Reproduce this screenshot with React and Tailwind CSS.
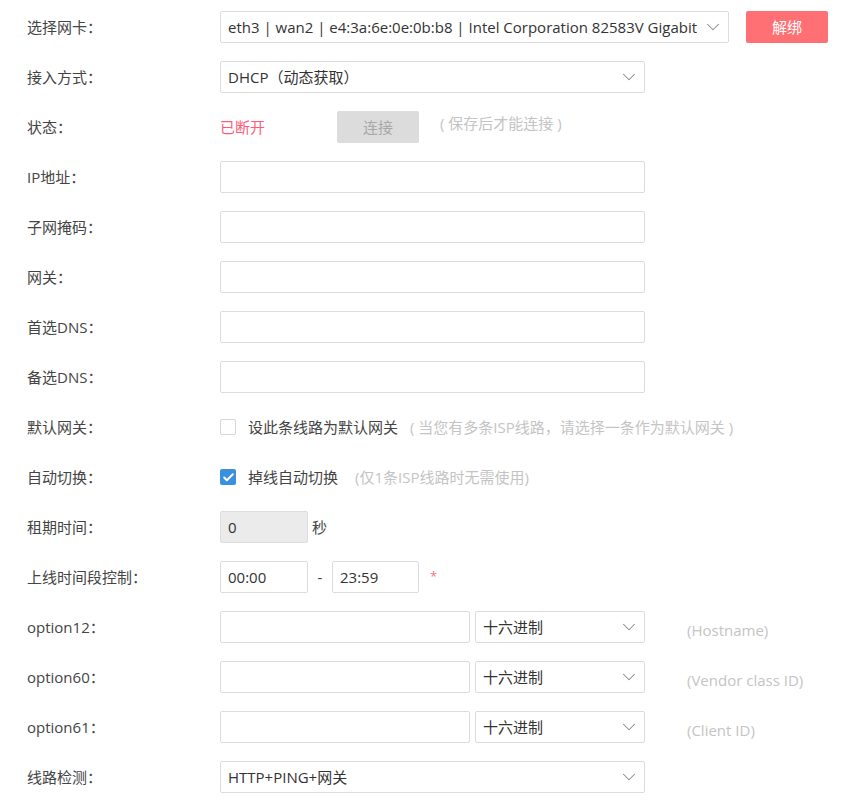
import { ChevronDown, Check } from 'lucide-react'

const Label = ({ children }) => (
  <div className="w-[193px] shrink-0 text-[15px] text-[#444]">{children}</div>
)

const Row = ({ label, children }) => (
  <div className="flex h-[32px] items-center mb-[18px]">
    <Label>{label}</Label>
    {children}
  </div>
)

const Input = ({ className = '', value = '', disabled }) => (
  <div
    className={`h-[32px] rounded-[2px] border border-[#dcdcdc] px-[7px] flex items-center text-[15px] text-[#333] ${disabled ? 'bg-[#ebebeb]' : 'bg-white'} ${className}`}
  >
    {value}
  </div>
)

const Select = ({ className = '', value }) => (
  <div className={`h-[32px] rounded-[2px] border border-[#dcdcdc] bg-white pl-[7px] pr-[4px] flex items-center justify-between text-[15px] text-[#333] ${className}`}>
    <span className="truncate">{value}</span>
    <ChevronDown size={22} strokeWidth={1.1} className="text-[#888] shrink-0" />
  </div>
)

const Hint = ({ children, className = '' }) => (
  <span className={`text-[15px] text-[#c4c4c4] ${className}`}>{children}</span>
)

export default function App() {
  return (
    <div
      className="w-[854px] h-[804px] bg-white pt-[11px] pl-[27px] overflow-hidden"
      style={{ fontFamily: '"Open Sans", "Noto Sans CJK SC", sans-serif' }}
    >
      <Row label="选择网卡：">
        <Select className="w-[509px]" value="eth3 | wan2 | e4:3a:6e:0e:0b:b8 | Intel Corporation 82583V Gigabit" />
        <button className="ml-[17px] h-[32px] w-[82px] rounded-[2px] bg-[#ff7075] text-[15px] text-white">解绑</button>
      </Row>
      <Row label="接入方式：">
        <Select className="w-[425px]" value="DHCP（动态获取）" />
      </Row>
      <Row label="状态：">
        <span className="w-[117px] text-[15px] text-[#ff5b79]">已断开</span>
        <button className="h-[32px] w-[82px] rounded-[2px] bg-[#dcdcdc] text-[15px] text-[#a8a8a8]">连接</button>
        <Hint className="ml-[21px] -mt-[8px]">( 保存后才能连接 )</Hint>
      </Row>
      <Row label="IP地址：">
        <Input className="w-[425px]" />
      </Row>
      <Row label="子网掩码：">
        <Input className="w-[425px]" />
      </Row>
      <Row label="网关：">
        <Input className="w-[425px]" />
      </Row>
      <Row label="首选DNS：">
        <Input className="w-[425px]" />
      </Row>
      <Row label="备选DNS：">
        <Input className="w-[425px]" />
      </Row>
      <Row label="默认网关：">
        <div className="w-[16px] h-[16px] rounded-[2px] border border-[#d6d6d6] bg-white" />
        <span className="ml-[12px] text-[15px] text-[#444]">设此条线路为默认网关</span>
        <Hint className="ml-[12px]">( 当您有多条ISP线路，请选择一条作为默认网关 )</Hint>
      </Row>
      <Row label="自动切换：">
        <div className="w-[16px] h-[16px] rounded-[2px] bg-[#3b8fdf] flex items-center justify-center">
          <Check size={13} strokeWidth={3.5} className="text-white" />
        </div>
        <span className="ml-[12px] text-[15px] text-[#444]">掉线自动切换</span>
        <Hint className="ml-[17px]">(仅1条ISP线路时无需使用)</Hint>
      </Row>
      <Row label="租期时间：">
        <Input className="w-[88px]" value="0" disabled />
        <span className="ml-[4px] text-[15px] text-[#444]">秒</span>
      </Row>
      <Row label="上线时间段控制：">
        <Input className="w-[88px]" value="00:00" />
        <span className="w-[24px] text-center text-[15px] text-[#444]">-</span>
        <Input className="w-[87px]" value="23:59" />
        <span className="ml-[11px] text-[13px] text-[#f07a7a]">*</span>
      </Row>
      <Row label="option12：">
        <Input className="w-[250px]" />
        <Select className="ml-[5px] w-[170px]" value="十六进制" />
        <Hint className="ml-[42px] mt-[6px]">(Hostname)</Hint>
      </Row>
      <Row label="option60：">
        <Input className="w-[250px]" />
        <Select className="ml-[5px] w-[170px]" value="十六进制" />
        <Hint className="ml-[42px] mt-[6px]">(Vendor class ID)</Hint>
      </Row>
      <Row label="option61：">
        <Input className="w-[250px]" />
        <Select className="ml-[5px] w-[170px]" value="十六进制" />
        <Hint className="ml-[42px] mt-[6px]">(Client ID)</Hint>
      </Row>
      <Row label="线路检测：">
        <Select className="w-[425px]" value="HTTP+PING+网关" />
      </Row>
    </div>
  )
}
